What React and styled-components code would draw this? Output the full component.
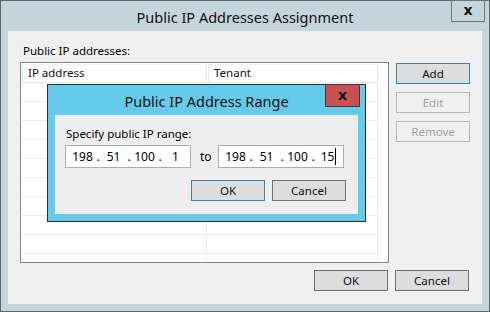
import React from "react";
import styled, { createGlobalStyle } from "styled-components";

const GlobalStyle = createGlobalStyle`
    html, body {
        margin: 0;
        padding: 0;
        background: #ffffff;
    }
    body {
        font-family: "Noto Sans", "Open Sans", sans-serif;
        font-size: 11.5px;
        color: #000;
    }
`;

const Window = styled.div`
    width: 490px;
    height: 312px;
    box-sizing: border-box;
    border: 1px solid #5f6669;
    background: #c4d6dc;
    display: flex;
    flex-direction: column;
`;

const TitleBar = styled.div`
    height: 30px;
    display: grid;
    grid-template-columns: 1fr auto 1fr;
    align-items: center;
`;

const Title = styled.div`
    grid-column: 2;
    font-size: 14.5px;
    color: #111;
    padding-top: 1px;
`;

const CloseButton = styled.div`
    grid-column: 3;
    justify-self: end;
    align-self: start;
    margin-top: -1px;
    margin-right: ${p => p.$right || 4}px;
    width: ${p => p.$w || 34}px;
    height: ${p => p.$h || 22}px;
    box-sizing: border-box;
    border: 1px solid ${p => p.$border || "#6f767a"};
    background: ${p => p.$bg || "#c4d6dc"};
    display: flex;
    align-items: center;
    justify-content: center;
    font-family: "DejaVu Sans", sans-serif;
    font-weight: bold;
    font-size: 14px;
    color: #111;
    padding-bottom: 2px;
`;

const Body = styled.div`
    position: relative;
    flex: 1;
    margin: 0 7px 7px;
    background: #f0f0f0;
    padding: 12px 12px 13px;
    display: flex;
    flex-direction: column;
`;

const Label = styled.div`
    padding-left: ${p => p.$indent || 3}px;
    height: 19px;
    line-height: 15px;
`;

const Main = styled.div`
    display: flex;
    gap: 7px;
    align-items: flex-start;
`;

const ListBox = styled.div`
    width: 369px;
    height: 201px;
    box-sizing: border-box;
    border: 1px solid #82878c;
    background: #fff;
    padding: 1px 0 0 1px;
    overflow: hidden;
`;

const HeaderRow = styled.div`
    display: flex;
    gap: 1px;
    height: 19px;
`;

const HeaderCell = styled.div`
    width: ${p => p.$w}px;
    box-sizing: border-box;
    border: 1px solid #e6e6e6;
    border-top-color: #f3f3f3;
    padding-left: 5px;
    line-height: 16px;
    color: #111;
`;

const Row = styled.div`
    display: flex;
    height: 19px;
    width: 356px;
    box-sizing: border-box;
    border-bottom: 1px solid #ececec;
`;

const Cell = styled.div`
    width: ${p => p.$w}px;
    border-right: 1px solid #ececec;
`;

const ButtonColumn = styled.div`
    display: flex;
    flex-direction: column;
    gap: 8px;
    padding-top: 1px;
`;

const Button = styled.div`
    width: ${p => p.$w || 74}px;
    height: ${p => p.$h || 21}px;
    box-sizing: border-box;
    border: 1px solid ${p => (p.$disabled ? "#b5b9bc" : p.$primary ? "#3c7fb1" : "#707070")};
    background: ${p => (p.$disabled ? "#f0f0f0" : "#dddddd")};
    color: ${p => (p.$disabled ? "#a3a3a3" : "#111")};
    display: flex;
    align-items: center;
    justify-content: center;
    padding-bottom: 1px;
`;

const Footer = styled.div`
    margin-top: auto;
    display: flex;
    justify-content: flex-end;
    gap: 7px;
    padding-right: 1px;
`;

/* modal child dialog */
const Dialog = styled.div`
    position: absolute;
    left: 39px;
    top: 53px;
    width: 319px;
    height: 138px;
    box-sizing: border-box;
    border: 1px solid #2a2d2f;
    background: #65cbe9;
    display: flex;
    flex-direction: column;
`;

const DialogBody = styled.div`
    flex: 1;
    margin: 0 7px 7px;
    background: #eeeeee;
    padding: 11px 10px 13px;
    display: flex;
    flex-direction: column;
`;

const RangeRow = styled.div`
    display: flex;
    align-items: center;
    gap: 9px;
`;

const IpBox = styled.div`
    width: 126px;
    height: 23px;
    box-sizing: border-box;
    border: 1px solid #abadb3;
    background: #fff;
    display: flex;
    align-items: center;
    padding-left: 3px;
    font-size: 12px;
`;

const Octet = styled.span`
    width: 27px;
    display: flex;
    align-items: center;
    justify-content: center;
`;

const Dot = styled.span`
    width: 4px;
    text-align: center;
`;

const Caret = styled.span`
    display: inline-block;
    width: 1px;
    height: 17px;
    margin-left: 1px;
    background: #000;
`;

const ToLabel = styled.span`
    width: 9px;
    font-size: 12px;
`;

const DialogFooter = styled.div`
    margin-top: auto;
    display: flex;
    justify-content: flex-end;
    gap: 7px;
    padding-right: 2px;
`;

const IpAddress = ({ parts, caret }) => (
    <IpBox>
        {parts.map((p, i) => (
            <React.Fragment key={i}>
                <Octet>
                    {p}
                    {caret && i === parts.length - 1 && <Caret />}
                </Octet>
                {i < parts.length - 1 && <Dot>.</Dot>}
            </React.Fragment>
        ))}
    </IpBox>
);

const App = () => {
    const rows = Array.from({ length: 10 });

    return (
        <>
            <GlobalStyle />
            <Window>
                <TitleBar>
                    <Title>Public IP Addresses Assignment</Title>
                    <CloseButton>x</CloseButton>
                </TitleBar>
                <Body>
                    <Label>Public IP addresses:</Label>
                    <Main>
                        <ListBox>
                            <HeaderRow>
                                <HeaderCell $w={185}>IP address</HeaderCell>
                                <HeaderCell $w={170}>Tenant</HeaderCell>
                            </HeaderRow>
                            {rows.map((_, i) => (
                                <Row key={i}>
                                    <Cell $w={185} />
                                    <Cell $w={170} />
                                </Row>
                            ))}
                        </ListBox>
                        <ButtonColumn>
                            <Button $primary>Add</Button>
                            <Button $disabled>Edit</Button>
                            <Button $disabled>Remove</Button>
                        </ButtonColumn>
                    </Main>
                    <Footer>
                        <Button>OK</Button>
                        <Button>Cancel</Button>
                    </Footer>

                    <Dialog>
                        <TitleBar>
                            <Title>Public IP Address Range</Title>
                            <CloseButton $right={5} $w={35} $h={23} $bg="#c75050" $border="#3b3b3b">x</CloseButton>
                        </TitleBar>
                        <DialogBody>
                            <Label $indent={1}>Specify public IP range:</Label>
                            <RangeRow>
                                <IpAddress parts={["198", "51", "100", "1"]} />
                                <ToLabel>to</ToLabel>
                                <IpAddress parts={["198", "51", "100", "15"]} caret />
                            </RangeRow>
                            <DialogFooter>
                                <Button $primary>OK</Button>
                                <Button>Cancel</Button>
                            </DialogFooter>
                        </DialogBody>
                    </Dialog>
                </Body>
            </Window>
        </>
    );
};

export default App;
